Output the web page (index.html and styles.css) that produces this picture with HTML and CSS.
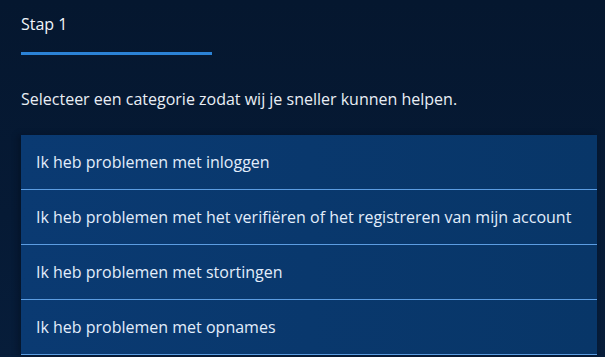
FILE: index.html
```html
<!DOCTYPE html>
<html lang="nl">
<head>
<meta charset="utf-8">
<title>Stap 1</title>
<link rel="stylesheet" href="styles.css">
</head>
<body>
<main class="page">
  <div class="step">Stap 1</div>
  <div class="bar"></div>
  <p class="intro">Selecteer een categorie zodat wij je sneller kunnen helpen.</p>
  <ul class="list">
    <li class="row">Ik heb problemen met inloggen</li>
    <li class="row">Ik heb problemen met het verifiëren of het registreren van mijn account</li>
    <li class="row">Ik heb problemen met stortingen</li>
    <li class="row">Ik heb problemen met opnames</li>
  </ul>
</main>
</body>
</html>
```

FILE: styles.css
```css
html, body {
  margin: 0;
  padding: 0;
  height: 100%;
}
body {
  background: linear-gradient(180deg, #05172f 0%, #061a35 60%, #071d3a 100%);
  font-family: "Open Sans", "Noto Sans", sans-serif;
  color: #eef3f9;
  overflow: hidden;
}
.page {
  padding: 13px 8px 0 21px;
}
.step {
  font-size: 16px;
  line-height: 22px;
  color: #f1f5fa;
}
.bar {
  width: 191px;
  height: 3px;
  margin-top: 17px;
  background: #2b82d6;
}
.intro {
  margin: 33px 0 0;
  font-size: 16px;
  line-height: 22px;
  color: #e9eef5;
}
.list {
  list-style: none;
  margin: 25px 0 0;
  padding: 0;
  background: linear-gradient(90deg, #0a3a72 0%, #083668 100%);
  box-shadow: -3px 0 6px rgba(0, 8, 20, 0.35);
}
.row {
  height: 54px;
  display: flex;
  align-items: center;
  padding-left: 15px;
  border-bottom: 1px solid #5c9de2;
  font-size: 16px;
  color: #e2edfb;
}
```
